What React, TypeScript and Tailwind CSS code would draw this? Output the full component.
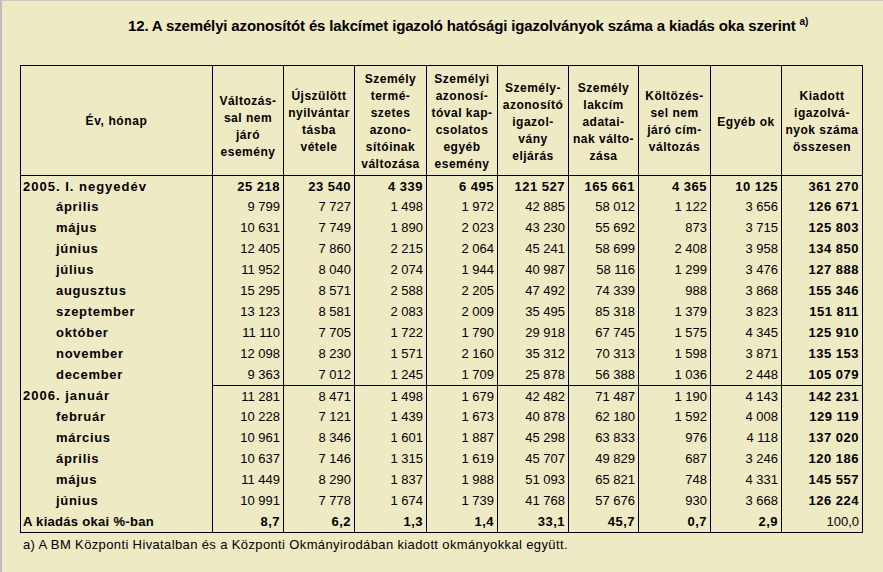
import React from "react";

type Row = { label: string; indent: boolean; vals: string[]; allBold?: boolean; lastBold?: boolean; sepTop?: boolean; pct?: boolean };

const raw: [string, boolean, string][] = [
  ["2005. I. negyedév", false, "25 218|23 540|4 339|6 495|121 527|165 661|4 365|10 125|361 270"],
  ["április", true, "9 799|7 727|1 498|1 972|42 885|58 012|1 122|3 656|126 671"],
  ["május", true, "10 631|7 749|1 890|2 023|43 230|55 692|873|3 715|125 803"],
  ["június", true, "12 405|7 860|2 215|2 064|45 241|58 699|2 408|3 958|134 850"],
  ["július", true, "11 952|8 040|2 074|1 944|40 987|58 116|1 299|3 476|127 888"],
  ["augusztus", true, "15 295|8 571|2 588|2 205|47 492|74 339|988|3 868|155 346"],
  ["szeptember", true, "13 123|8 581|2 083|2 009|35 495|85 318|1 379|3 823|151 811"],
  ["október", true, "11 110|7 705|1 722|1 790|29 918|67 745|1 575|4 345|125 910"],
  ["november", true, "12 098|8 230|1 571|2 160|35 312|70 313|1 598|3 871|135 153"],
  ["december", true, "9 363|7 012|1 245|1 709|25 878|56 388|1 036|2 448|105 079"],
  ["2006. január", false, "11 281|8 471|1 498|1 679|42 482|71 487|1 190|4 143|142 231"],
  ["február", true, "10 228|7 121|1 439|1 673|40 878|62 180|1 592|4 008|129 119"],
  ["március", true, "10 961|8 346|1 601|1 887|45 298|63 833|976|4 118|137 020"],
  ["április", true, "10 637|7 146|1 315|1 619|45 707|49 829|687|3 246|120 186"],
  ["május", true, "11 449|8 290|1 837|1 988|51 093|65 821|748|4 331|145 557"],
  ["június", true, "10 991|7 778|1 674|1 739|41 768|57 676|930|3 668|126 224"],
  ["A kiadás okai %-ban", false, "8,7|6,2|1,3|1,4|33,1|45,7|0,7|2,9|100,0"],
];

const rows: Row[] = raw.map(([label, indent, v], i) => ({
  label,
  indent,
  vals: v.split("|"),
  allBold: i === 0,
  sepTop: i === 10,
  pct: i === 16,
}));

const headers: string[][] = [
  ["Változás-", "sal nem", "járó", "esemény"],
  ["Újszülött", "nyilvántar", "tásba", "vétele"],
  ["Személy", "termé-", "szetes", "azono-", "sítóinak", "változása"],
  ["Személyi", "azonosí-", "tóval kap-", "csolatos", "egyéb", "esemény"],
  ["Személy-", "azonosító", "igazol-", "vány", "eljárás"],
  ["Személy", "lakcím", "adatai-", "nak válto-", "zása"],
  ["Költözés-", "sel nem", "járó cím-", "változás"],
  ["Egyéb ok"],
  ["Kiadott", "igazolvá-", "nyok száma", "összesen"],
];

const widths = [192, 71, 71, 72, 71, 71, 70, 72, 71, 81];

export default function App() {
  return (
    <div
      className="w-[883px] h-[572px] bg-[#EEEAC4] border-l-2 border-t border-l-[#BFBFBF] border-t-[#C8C8C8] overflow-hidden"
      style={{ fontFamily: '"Liberation Sans", Arial, sans-serif' }}
    >
      <div className="pt-[13px] pl-[126px] h-[64px]">
        <span
          className="text-[15px] font-bold text-black leading-[22px] tracking-[-0.15px] whitespace-nowrap"
          style={{ fontFamily: '"Liberation Sans Narrow", "Arial Narrow", "Liberation Sans", sans-serif' }}
        >
          12. A személyi azonosítót és lakcímet igazoló hatósági igazolványok száma a kiadás oka szerint
          <sup className="text-[10px] ml-[4px] relative -top-[6px] tracking-normal">a)</sup>
        </span>
      </div>
      <div className="pl-[18px]">
        <table className="border-collapse table-fixed border border-black text-black" style={{ width: 843 }}>
          <colgroup>
            {widths.map((w, i) => (
              <col key={i} style={{ width: w }} />
            ))}
          </colgroup>
          <thead>
            <tr className="h-[110px]">
              <th className="border border-black text-[12px] font-bold tracking-[0.6px] text-center align-middle p-0">
                Év, hónap
              </th>
              {headers.map((h, i) => (
                <th
                  key={i}
                  className={`border border-black text-[12px] font-bold tracking-[0.5px] leading-[17px] text-center align-middle px-0 pb-0 whitespace-nowrap ${
                    i === 0 ? "pt-[12px]" : "pt-[3px]"
                  }`}
                >
                  {h.map((l, j) => (
                    <div key={j}>{l}</div>
                  ))}
                </th>
              ))}
            </tr>
          </thead>
          <tbody>
            {rows.map((r, i) => (
              <tr key={i} className="h-[21px]">
                <td
                  className={`border-r border-black text-[13px] font-bold whitespace-nowrap p-0 ${
                    r.indent ? "pl-[35px] tracking-[0.7px]" : r.pct ? "pl-[2px] tracking-[0.3px]" : "pl-[2px] tracking-[1px]"
                  }`}
                >
                  {r.label}
                </td>
                {r.vals.map((v, j) => {
                  const bold = r.allBold || (r.pct ? j < 8 : j === 8);
                  return (
                    <td
                      key={j}
                      className={`border-r border-black text-right pr-[3px] p-0 text-[13px] whitespace-nowrap ${
                        bold ? "font-bold tracking-[0.5px]" : "font-normal"
                      } ${r.sepTop ? "border-t" : ""}`}
                    >
                      {v}
                    </td>
                  );
                })}
              </tr>
            ))}
          </tbody>
        </table>
      </div>
      <div className="pl-[21px] pt-[4px] text-[13px] text-black leading-[16px] tracking-[0.37px] whitespace-nowrap">
        a) A BM Központi Hivatalban és a Központi Okmányirodában kiadott okmányokkal együtt.
      </div>
    </div>
  );
}
